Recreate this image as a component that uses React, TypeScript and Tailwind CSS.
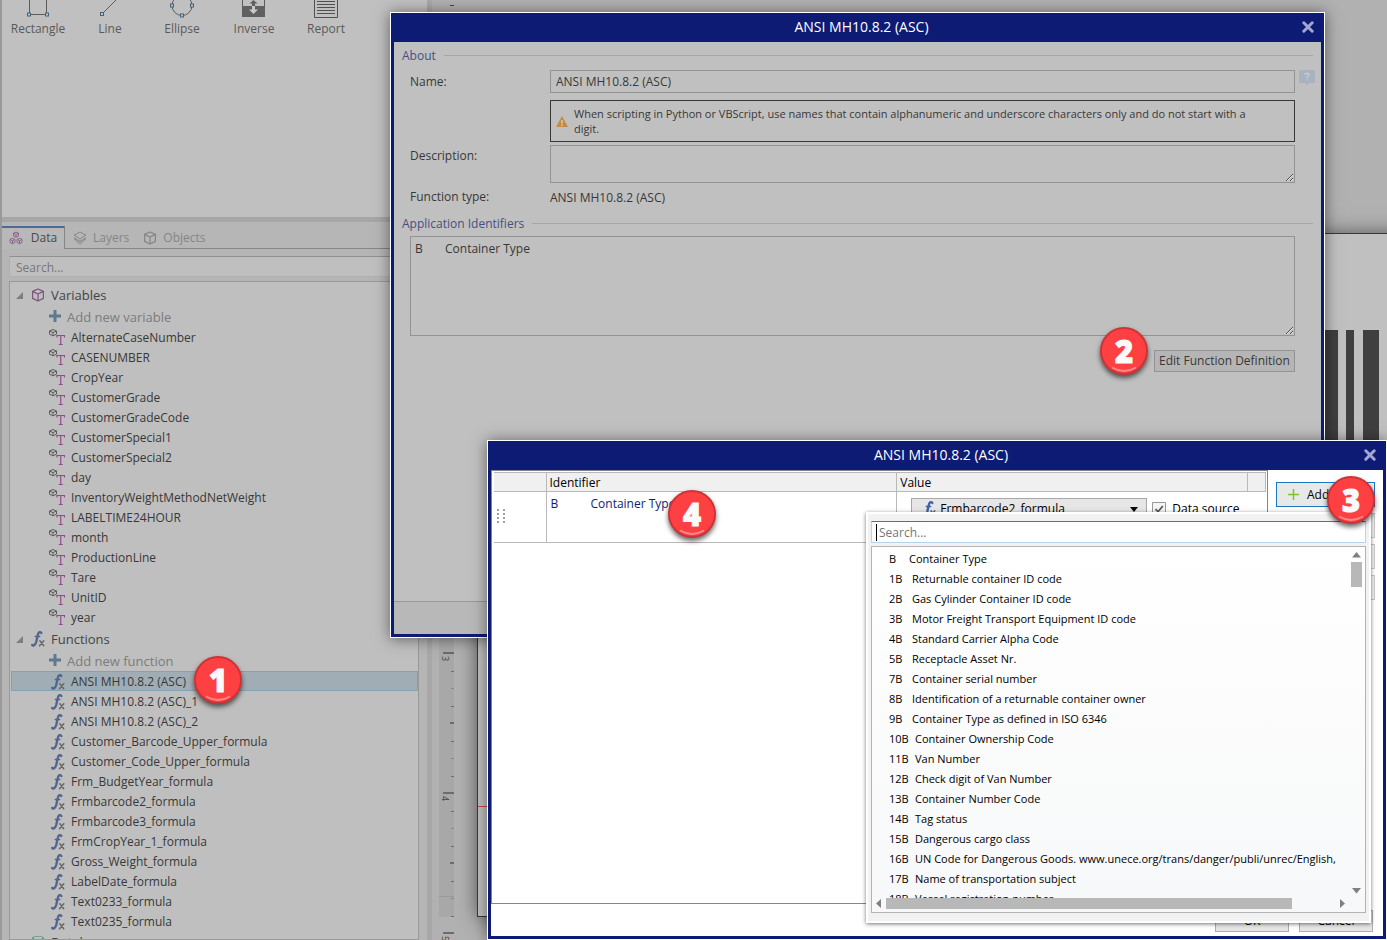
import React from "react";

const variables = [
  "AlternateCaseNumber", "CASENUMBER", "CropYear", "CustomerGrade", "CustomerGradeCode",
  "CustomerSpecial1", "CustomerSpecial2", "day", "InventoryWeightMethodNetWeight",
  "LABELTIME24HOUR", "month", "ProductionLine", "Tare", "UnitID", "year",
];

const functions = [
  "ANSI MH10.8.2 (ASC)", "ANSI MH10.8.2 (ASC)_1", "ANSI MH10.8.2 (ASC)_2",
  "Customer_Barcode_Upper_formula", "Customer_Code_Upper_formula", "Frm_BudgetYear_formula",
  "Frmbarcode2_formula", "Frmbarcode3_formula", "FrmCropYear_1_formula",
  "Gross_Weight_formula", "LabelDate_formula", "Text0233_formula", "Text0235_formula",
];

const identifiers: [string, string][] = [
  ["B", "Container Type"],
  ["1B", "Returnable container ID code"],
  ["2B", "Gas Cylinder Container ID code"],
  ["3B", "Motor Freight Transport Equipment ID code"],
  ["4B", "Standard Carrier Alpha Code"],
  ["5B", "Receptacle Asset Nr."],
  ["7B", "Container serial number"],
  ["8B", "Identification of a returnable container owner"],
  ["9B", "Container Type as defined in ISO 6346"],
  ["10B", "Container Ownership Code"],
  ["11B", "Van Number"],
  ["12B", "Check digit of Van Number"],
  ["13B", "Container Number Code"],
  ["14B", "Tag status"],
  ["15B", "Dangerous cargo class"],
  ["16B", "UN Code for Dangerous Goods. www.unece.org/trans/danger/publi/unrec/English,"],
  ["17B", "Name of transportation subject"],
  ["18B", "Vessel registration number"],
];

function Handle({ x, y }: { x: number; y: number }) {
  return <rect x={x - 1.5} y={y - 1.5} width="3" height="3" fill="#c0c0c0" stroke="#3f6480" />;
}

function Cube({ className, color }: { className: string; color: string }) {
  return (
    <svg viewBox="0 0 14 14" className={className} fill="none" stroke={color} strokeWidth="1.2" strokeLinejoin="round" aria-hidden="true">
      <path d="M7 1 12.4 3.4V10.4L7 13 1.6 10.4V3.4ZM1.6 3.4 7 6 12.4 3.4M7 6V13" />
    </svg>
  );
}

function FxIcon({ bright = false }: { bright?: boolean }) {
  const color = bright ? "#3f62a8" : "#52658f";
  return (
    <svg viewBox="0 0 14 18" className="h-[18px] w-[14px] shrink-0 overflow-visible" fill="none" strokeLinecap="round" aria-hidden="true">
      <path d="M10.300 2.900Q9.600 1.900 8.400 2.200 7.200 2.700 6.600 5.800L5.200 12Q4.400 15 2.700 15.500 1.600 15.700 1.200 14.900" stroke={color} strokeWidth="2.400" />
      <path d="M4.200 6.500H8.800" stroke={color} strokeWidth="1.300" />
      <path d="M8.900 10.800 12.700 15.700M12.800 10.800 8.500 15.700" stroke="#666" strokeWidth="1.500" />
    </svg>
  );
}

function VarIcon() {
  return (
    <svg viewBox="0 0 16 18" className="h-[18px] w-4 shrink-0" aria-hidden="true">
      <path d="M4 .5 7.500 2V5.200L4 6.800.5 5.200V2ZM.5 2 4 3.600 7.500 2M4 3.600V6.800" fill="none" stroke="#5c5c5c" strokeWidth="1" />
      <path d="M8 8.500V6.500H15.500V8.500M11.750 6.500V15.500M9.750 15.500H13.750" fill="none" stroke="#924a92" strokeWidth="1.200" />
    </svg>
  );
}

function Plus() {
  return (
    <svg viewBox="0 0 12 12" className="-mt-0.5 h-3 w-3 shrink-0" aria-hidden="true">
      <path d="M6 0V12M0 6H12" stroke="#60788f" strokeWidth="3" />
    </svg>
  );
}

function Expander() {
  return (
    <svg viewBox="0 0 7 7" className="h-[7px] w-[7px] shrink-0" aria-hidden="true">
      <path d="M7 0V7H0Z" fill="#7f7f7f" />
    </svg>
  );
}

function Badge({ n, className }: { n: number; className: string }) {
  return (
    <div className={`absolute z-30 flex h-12 w-12 items-center justify-center rounded-full border-2 border-[#cf3336] bg-[#ff4043] shadow-[0_3px_5px_rgba(0,0,0,0.6)] ${className}`}>
      <span className="font-['Open_Sans','DejaVu_Sans',sans-serif] text-[31px] leading-none font-extrabold text-[#fafafa] [-webkit-text-stroke:1px_#fafafa]">{n}</span>
      <svg viewBox="0 0 48 48" className="absolute -inset-0.5 h-12 w-12" fill="none" aria-hidden="true">
        <path d="M12 40.500Q24 47.500 36 40.500" stroke="#ff8a8c" strokeWidth="1.800" />
      </svg>
    </div>
  );
}

function TitleBar({ id }: { id: string }) {
  return (
    <header className="grid h-7 shrink-0 grid-cols-[1fr_auto_1fr] items-center bg-[#0d1b75] text-white">
      <h2 id={id} className="col-start-2 pb-0.5 pl-2 text-[14px] leading-5">ANSI MH10.8.2 (ASC)</h2>
      <button type="button" aria-label="Close" className="mr-1.5 justify-self-end px-px pb-0.5">
        <svg viewBox="0 0 12 12" className="h-3 w-3" aria-hidden="true">
          <path d="M1.800 1.800 10.200 10.200M10.200 1.800 1.800 10.200" stroke="#a3a8d0" strokeWidth="3" strokeLinecap="round" />
        </svg>
      </button>
    </header>
  );
}

function Legend({ children }: { children: React.ReactNode }) {
  return (
    <div className="flex h-[26px] items-center gap-2 px-2 pt-px text-[#474f80]">
      <h3>{children}</h3>
      <div className="h-px flex-1 bg-[#a6a6a6]" />
    </div>
  );
}

const toolIcons: [string, React.ReactNode][] = [
  ["Rectangle", <>
    <path d="M27.500 0V14.500H44.500V0" fill="none" stroke="#5c5c5c" />
    <Handle x={27} y={14.5} /><Handle x={45} y={14.5} />
  </>],
  ["Line", <><path d="M28 14 42 0" stroke="#5c5c5c" /><Handle x={28} y={14} /></>],
  ["Ellipse", <>
    <circle cx="36" cy="5.500" r="10" fill="none" stroke="#5c5c5c" />
    <Handle x={26} y={5.5} /><Handle x={46} y={5.5} /><Handle x={36} y={15.5} />
  </>],
  ["Inverse", <>
    <path d="M24.500 0V6M46.500 0V6" stroke="#5c5c5c" />
    <path d="M24 6H47V17H24Z" fill="#606060" />
    <path d="M35.500 0 39.500 3.500H37V6H34V3.500H31.500Z" fill="#606060" />
    <path d="M34 6H37V9.500H40L35.500 14 31 9.500H34Z" fill="#c8c8c8" />
  </>],
  ["Report", <path d="M24.500 0V17.500H47.500V0M27 1.500H45M27 4.500H45M27 7.500H45M27 10.500H45M27 13.500H45" fill="none" stroke="#505050" />],
];

function Toolbox() {
  return (
    <div className="flex h-[217px] shrink-0 items-start bg-[#c0c0c0]">
      {toolIcons.map(([name, drawing]) => (
        <button type="button" key={name} className="w-[72px] text-[#5a5a5a]">
          <svg viewBox="0 0 72 21" className="block h-[21px] w-[72px]" aria-hidden="true">{drawing}</svg>
          {name}
        </button>
      ))}
    </div>
  );
}

function Tabs() {
  return (
    <div role="tablist" className="flex h-[27px] shrink-0 items-end bg-[#b6b6b6] text-[#858585]">
      <button role="tab" aria-selected="true" type="button" className="flex h-[23px] w-[63px] items-center justify-center gap-2 border-t-2 border-r border-t-[#506a98] border-r-[#858585] bg-[#b8b8b8] pb-0.5 text-[#4a4a4a]">
        <svg viewBox="0 0 14 14" className="h-[14px] w-[14px]" fill="none" stroke="#8a6488" aria-hidden="true">
          <path d="M7 1 9.500 2.200V5L7 6.300 4.500 5V2.200ZM4.500 2.200 7 3.500 9.500 2.200M7 3.500V6M3.500 7.200 6 8.400V11.400L3.500 12.800 1 11.400V8.400ZM1 8.400 3.500 9.700 6 8.400M3.500 9.700V12.500M10.500 7.200 13 8.400V11.400L10.500 12.800 8 11.400V8.400ZM8 8.400 10.500 9.700 13 8.400M10.500 9.700V12.500" />
        </svg>
        Data
      </button>
      <div className="flex h-[23px] flex-1 items-center border-b border-[#858585] pt-0.5">
        <button role="tab" aria-selected="false" type="button" className="flex items-center gap-1.5 pr-1.5 pl-2">
          <svg viewBox="0 0 14 14" className="h-[14px] w-[14px]" aria-hidden="true">
            <path d="M7 1 13 4.200 7 8 1 4.200Z" fill="none" stroke="#858585" />
            <path d="M1 6.500 7 10 13 6.500V9L7 13.500 1 9Z" fill="#858585" />
            <path d="M1 8.500 7 12 13 8.500" fill="none" stroke="#b6b6b6" />
          </svg>
          Layers
        </button>
        <button role="tab" aria-selected="false" type="button" className="flex items-center gap-1.5 px-2">
          <Cube className="h-[14px] w-[14px]" color="#858585" />
          Objects
        </button>
      </div>
    </div>
  );
}

function Tree() {
  return (
    <div className="mt-1 min-h-0 flex-1 overflow-hidden border border-[#999] bg-[#bfbfbf] pt-0.5 text-[#383838]">
      <div className="flex h-[22px] items-center pl-1.5 text-[#444]">
        <Expander />
        <Cube className="ml-2 h-[14px] w-[14px]" color="#7c547c" />
        <span className="ml-1.5 text-[13px]">Variables</span>
      </div>
      <button type="button" className="flex h-[22px] w-full items-center gap-1.5 pl-[39px] text-[13px] text-[#7c7c7c]"><Plus />Add new variable</button>
      <ul>
        {variables.map((v) => (
          <li key={v} className="flex h-5 items-center gap-1.5 pl-[39px]"><VarIcon />{v}</li>
        ))}
      </ul>
      <div className="flex h-[22px] items-center pl-1.5 text-[#444]">
        <Expander />
        <span className="ml-2 flex w-[14px]"><FxIcon /></span>
        <span className="ml-1.5 text-[13px]">Functions</span>
      </div>
      <button type="button" className="flex h-[21px] w-full items-center gap-1.5 pl-[39px] text-[13px] text-[#7c7c7c]"><Plus />Add new function</button>
      <ul className="pl-px">
        {functions.map((f, i) => (
          <li key={f} className={`flex h-5 items-center gap-1.5 border pt-px pl-[39px] ${i === 0 ? "border-[#83a3b2] bg-[#a0adb4]" : "border-transparent"}`}><FxIcon />{f}</li>
        ))}
      </ul>
      <div className="flex h-[22px] items-center pl-1.5 text-[#444]">
        <Expander />
        <svg viewBox="0 0 14 14" className="ml-2 h-[14px] w-[14px]" aria-hidden="true">
          <path d="M1 3C1 .3 13 .3 13 3V11C13 13.700 1 13.700 1 11Z" fill="#5e9b80" />
          <ellipse cx="7" cy="3" rx="4.500" ry="1.200" fill="#b5c5bd" />
        </svg>
        <span className="ml-1.5 text-[13px]">Databases</span>
      </div>
    </div>
  );
}

function Ruler() {
  const ticks = Array.from({ length: 17 }, (_, i) => i);
  return (
    <svg className="absolute top-0 left-[7px] h-[940px] w-[15px]" viewBox="0 0 15 940" aria-hidden="true">
      <path d="M0 234H15V917H0Z" fill="#a8a8a8" />
      <path d="M11 5.500H15" stroke="#444" />
      {ticks.map((i) => {
        const y = Math.round(653 + i * 17.5);
        const major = i % 8 === 0;
        return <rect key={i} x={major ? 4 : i % 4 === 0 ? 11 : 12} y={y - (i % 4 === 0 ? 1 : 0)} width="11" height={i % 4 === 0 ? 2 : 1} fill={i % 4 === 2 ? "#888" : "#6c6c6c"} />;
      })}
      <path d="M0 896.500H15" stroke="#999" />
      {[3, 4, 5].map((n) => (
        <text key={n} transform={`translate(3 ${656 + (n - 3) * 140}) rotate(90)`} fontFamily="Open Sans, sans-serif" fontSize="9" fill="#444">{n}</text>
      ))}
    </svg>
  );
}

function Canvas() {
  return (
    <main className="relative min-w-0 flex-1 overflow-hidden border-l-[5px] border-[#a8a8a8] bg-[#b1b1b1]">
      <Ruler />
      <div className="absolute top-[233px] -right-5 left-[45px] h-[684px] border border-[#383838] bg-[#c0c0c0] shadow-[0_0_18px_rgba(0,0,0,0.5)]">
        <div className="mt-[572px] h-px bg-[#c84848]" />
        <svg viewBox="0 0 62 110" className="absolute top-24 right-[19px] h-[110px] w-[62px]" aria-hidden="true">
          <path d="M0 0H13V110H0ZM21 0H29V110H21ZM38 0H54V110H38Z" fill="#3f3f3f" />
        </svg>
      </div>
    </main>
  );
}

function FunctionDialog() {
  return (
    <section role="dialog" aria-labelledby="function-title" className="absolute top-3 right-[62px] left-[390px] flex h-[626px] flex-col border border-white bg-[#0d1b75] p-[3px] pt-0 shadow-[0_1px_14px_rgba(0,0,0,0.5)]">
      <div className="h-px shrink-0" />
      <TitleBar id="function-title" />
      <div className="flex-1 bg-[#c0c0c0] text-[#383838]">
        <Legend>About</Legend>
        <div className="grid grid-cols-[140px_1fr_20px] pt-0.5 pr-1.5 pl-4">
          <label htmlFor="name" className="pt-1 leading-4">Name:</label>
          <input id="name" defaultValue="ANSI MH10.8.2 (ASC)" className="h-[23px] min-w-0 border border-[#939393] bg-transparent px-[5px] outline-none" />
          <svg viewBox="0 0 16 16" className="ml-1 h-4 w-4" role="img" aria-label="Help">
            <path d="M1.500 0H14.500Q16 0 16 1.500V11.500Q16 13 14.500 13H10L8 15.500 6 13H1.500Q0 13 0 11.500V1.500Q0 0 1.500 0Z" fill="#a9b2bf" />
            <path d="M6 4.800Q6 3.200 8 3.200T10 5Q10 6 8.800 6.600 8 7 8 8.200M8 9.200V10.500" fill="none" stroke="#c6cad0" strokeWidth="1.500" />
          </svg>
          <div className="col-start-2 mt-[7px] flex h-[42px] items-center gap-1.5 border border-[#383838] pr-7 pl-[5px] text-[11px] leading-[15px]">
            <svg viewBox="0 0 12 11" className="h-[11px] w-3 shrink-0" aria-hidden="true">
              <path d="M6 0 12 11H0Z" fill="#c68a42" />
              <path d="M6 4V7.500M6 8.500V10" stroke="#e0d0b8" strokeWidth="1.400" />
            </svg>
            <p>When scripting in Python or VBScript, use names that contain alphanumeric and underscore characters only and do not start with a digit.</p>
          </div>
          <label htmlFor="description" className="col-start-1 mt-[3px] pt-[3px] leading-4">Description:</label>
          <textarea id="description" className="mt-[3px] block h-[38px] resize border border-[#939393] bg-transparent outline-none" />
          <span className="col-start-1 h-[27px] leading-7">Function type:</span>
          <span className="h-[27px] leading-[30px]">ANSI MH10.8.2 (ASC)</span>
        </div>
        <Legend>Application Identifiers</Legend>
        <div className="flex flex-col items-end pr-[26px] pl-4">
          <textarea aria-label="Application Identifiers" readOnly defaultValue={"B\tContainer Type"} className="block h-[100px] w-full resize border border-[#939393] bg-transparent px-1 pt-1 leading-4 outline-none [tab-size:30px]" />
          <button type="button" className="mt-3.5 h-[22px] w-[141px] border border-[#939393] bg-[#b5b5b5]">Edit Function Definition</button>
        </div>
      </div>
      <footer className="h-[33px] shrink-0 border-t border-[#999] bg-[#b8b8b8]" />
    </section>
  );
}

function IdentifierMenu() {
  return (
    <div className="absolute top-[71px] right-[15px] flex h-[411px] w-[505px] flex-col border-2 border-white bg-[#f2f2f2] px-[3px] pt-[7px] pb-2 shadow-[0_1px_4px_rgba(0,0,0,0.55)]">
      <div className="flex h-[22px] shrink-0 items-center border border-[#b5d5ee] border-t-[#3a78b5] bg-white pl-1">
        <span className="h-[17px] w-px bg-black" />
        <input type="search" aria-label="Search identifiers" placeholder="Search..." className="min-w-0 flex-1 bg-transparent pt-0.5 pl-0.5 outline-none placeholder:text-[#767676]" />
      </div>
      <div className="mt-[3px] flex min-h-0 flex-1 flex-col border border-[#b0b4b8] bg-linear-to-b from-white to-[#f7f8f9]">
        <div className="flex min-h-0 flex-1">
          <ul className="min-w-0 flex-1 overflow-hidden pt-0.5 pl-[17px] text-[11px] text-black">
            {identifiers.map(([code, name], i) => (
              <li key={code} className="flex h-5 items-center whitespace-pre">
                <span className={`shrink-0 ${i === 0 ? "w-5" : i < 9 ? "w-[23px]" : "w-[26px]"}`}>{code}</span>
                <span>{name}</span>
              </li>
            ))}
          </ul>
          <div className="flex w-[14px] flex-col items-start pt-[5px]">
            <svg viewBox="0 0 11 6" className="h-1.5 w-[11px]" aria-hidden="true"><path d="M5.500 0 10 5.500H1Z" fill="#808080" /></svg>
            <div className="mt-1 h-[25px] w-[11px] bg-[#b8b8b8]" />
            <svg viewBox="0 0 11 6" className="mt-auto mb-1 h-1.5 w-[11px]" aria-hidden="true"><path d="M5.500 5.500 10 0H1Z" fill="#808080" /></svg>
          </div>
        </div>
        <div className="flex h-[14px] shrink-0 items-start pr-[14px] pl-1">
          <svg viewBox="0 0 6 11" className="h-[11px] w-1.5" aria-hidden="true"><path d="M0 5.500 5 1V10Z" fill="#808080" /></svg>
          <div className="ml-1 h-[11px] w-[406px] bg-[#b8b8b8]" />
          <svg viewBox="0 0 6 11" className="mr-1.5 ml-auto h-[11px] w-1.5" aria-hidden="true"><path d="M6 5.500 1 1V10Z" fill="#808080" /></svg>
        </div>
      </div>
    </div>
  );
}

function DefinitionDialog() {
  return (
    <section role="dialog" aria-labelledby="definition-title" className="absolute top-[440px] right-0 left-[487px] flex h-[500px] flex-col border border-white bg-[#0d1b75] p-[3px] pt-0 text-black shadow-[0_1px_14px_rgba(0,0,0,0.5)]">
      <div className="h-px shrink-0" />
      <TitleBar id="definition-title" />
      <div className="flex min-h-0 flex-1 bg-white">
        <div className="min-w-0 flex-1 border border-[#85858c] pt-px pr-px pl-0.5">
          <table className="w-full table-fixed border-collapse">
            <colgroup><col className="w-[52px]" /><col /><col /><col className="w-[18px]" /></colgroup>
            <thead>
              <tr className="h-[19px] bg-[#f0f0f0] text-left">
                <th className="border border-l-0 border-[#b9b9b9]" />
                <th className="border border-[#b9b9b9] p-0 pl-[3px] leading-[17px] font-normal">Identifier</th>
                <th className="border border-[#b9b9b9] p-0 pl-[3px] leading-[17px] font-normal">Value</th>
                <th className="border border-[#b9b9b9]" />
              </tr>
            </thead>
            <tbody>
              <tr className="h-[51px] align-top">
                <td className="border-r border-b border-[#b9b9b9] pt-[17px] pl-[3px]">
                  <svg viewBox="0 0 8 14" className="h-[14px] w-2" fill="#a0a0a0" aria-hidden="true">
                    <path d="M0 0h2v2H0zM6 0h2v2H6zM0 4h2v2H0zM6 4h2v2H6zM0 8h2v2H0zM6 8h2v2H6zM0 12h2v2H0zM6 12h2v2H6z" />
                  </svg>
                </td>
                <td className="border-r border-b border-[#b9b9b9] pt-1 pl-1 leading-4 text-[#101c78]">
                  <span className="inline-block w-10">B</span>Container Type
                </td>
                <td colSpan={2} className="border-b border-[#b9b9b9] pt-1.5 pl-3.5">
                  <div className="flex items-center">
                    <div className="grid h-[22px] w-[236px] items-center border border-[#a8a8a8] bg-[#e6e6e6]">
                      <select aria-label="Value" className="col-start-1 row-start-1 h-5 w-full appearance-none bg-transparent pl-7 outline-none">
                        <option>Frmbarcode2_formula</option>
                      </select>
                      <span className="pointer-events-none col-start-1 row-start-1 flex items-center justify-between pr-2 pl-2.5">
                        <FxIcon bright />
                        <svg viewBox="0 0 8 5" className="h-[5px] w-2" aria-hidden="true"><path d="M0 0H8L4 5Z" /></svg>
                      </span>
                    </div>
                    <label className="ml-[5px] flex items-center gap-1.5">
                      <input type="checkbox" defaultChecked className="peer sr-only" />
                      <svg viewBox="0 0 14 14" className="h-[14px] w-[14px]" fill="none" aria-hidden="true">
                        <path d="M.5 .5H13.500V13.500H.5Z" fill="#f4f4f4" stroke="#999" />
                        <path d="M3.500 7 6 9.800 10.800 4" stroke="#555" strokeWidth="1.700" />
                      </svg>
                      Data source
                    </label>
                  </div>
                </td>
              </tr>
            </tbody>
          </table>
        </div>
        <div className="flex w-[115px] flex-col gap-1.5 pt-3 pr-2 pl-2">
          <button type="button" className="flex h-[25px] items-center gap-2 border border-[#1a78c2] bg-[#e8e8e8] pl-[11px]">
            <svg viewBox="0 0 11 11" className="h-[11px] w-[11px]" aria-hidden="true"><path d="M5.500 0V11M0 5.500H11" stroke="#7cc42a" strokeWidth="1.500" /></svg>
            Add
          </button>
          <button type="button" aria-label="Delete" className="h-[25px] border border-[#c8c8c8] bg-[#f0f0f0]" />
          <button type="button" aria-label="Move up" className="h-[25px] border border-[#c8c8c8] bg-[#f0f0f0]" />
          <button type="button" aria-label="Move down" className="h-[25px] border border-[#c8c8c8] bg-[#f0f0f0]" />
        </div>
      </div>
      <footer className="flex h-8 shrink-0 items-start justify-end gap-2.5 bg-white pt-1.5 pr-2.5">
        <button type="button" className="h-[22px] w-[74px] border border-[#adadad] bg-[#e6e6e6]">OK</button>
        <button type="button" className="h-[22px] w-[74px] border border-[#adadad] bg-[#e6e6e6]">Cancel</button>
      </footer>
      <IdentifierMenu />
    </section>
  );
}

export default function App() {
  return (
    <div className="relative flex h-screen overflow-hidden bg-[#b5b5b5] font-['Open_Sans','Noto_Sans',sans-serif] text-[12px] leading-4">
      <aside className="flex w-[427px] shrink-0 flex-col border-l-2 border-[#999]">
        <Toolbox />
        <div className="h-[5px] shrink-0 bg-[#a6a6a6]" />
        <Tabs />
        <div className="flex min-h-0 flex-1 flex-col pt-[7px] pr-2 pl-[7px]">
          <input type="search" aria-label="Search" placeholder="Search..." className="h-[21px] shrink-0 border border-[#b0b0b0] border-t-[#909090] bg-[#bfbfbf] px-1.5 pt-0.5 outline-none placeholder:text-[#777]" />
          <Tree />
        </div>
      </aside>
      <Canvas />
      <FunctionDialog />
      <DefinitionDialog />
      <Badge n={1} className="top-[656px] left-[194px]" />
      <Badge n={2} className="top-[327px] right-[239px]" />
      <Badge n={3} className="top-[476px] right-3" />
      <Badge n={4} className="top-[490px] left-[668px]" />
    </div>
  );
}
